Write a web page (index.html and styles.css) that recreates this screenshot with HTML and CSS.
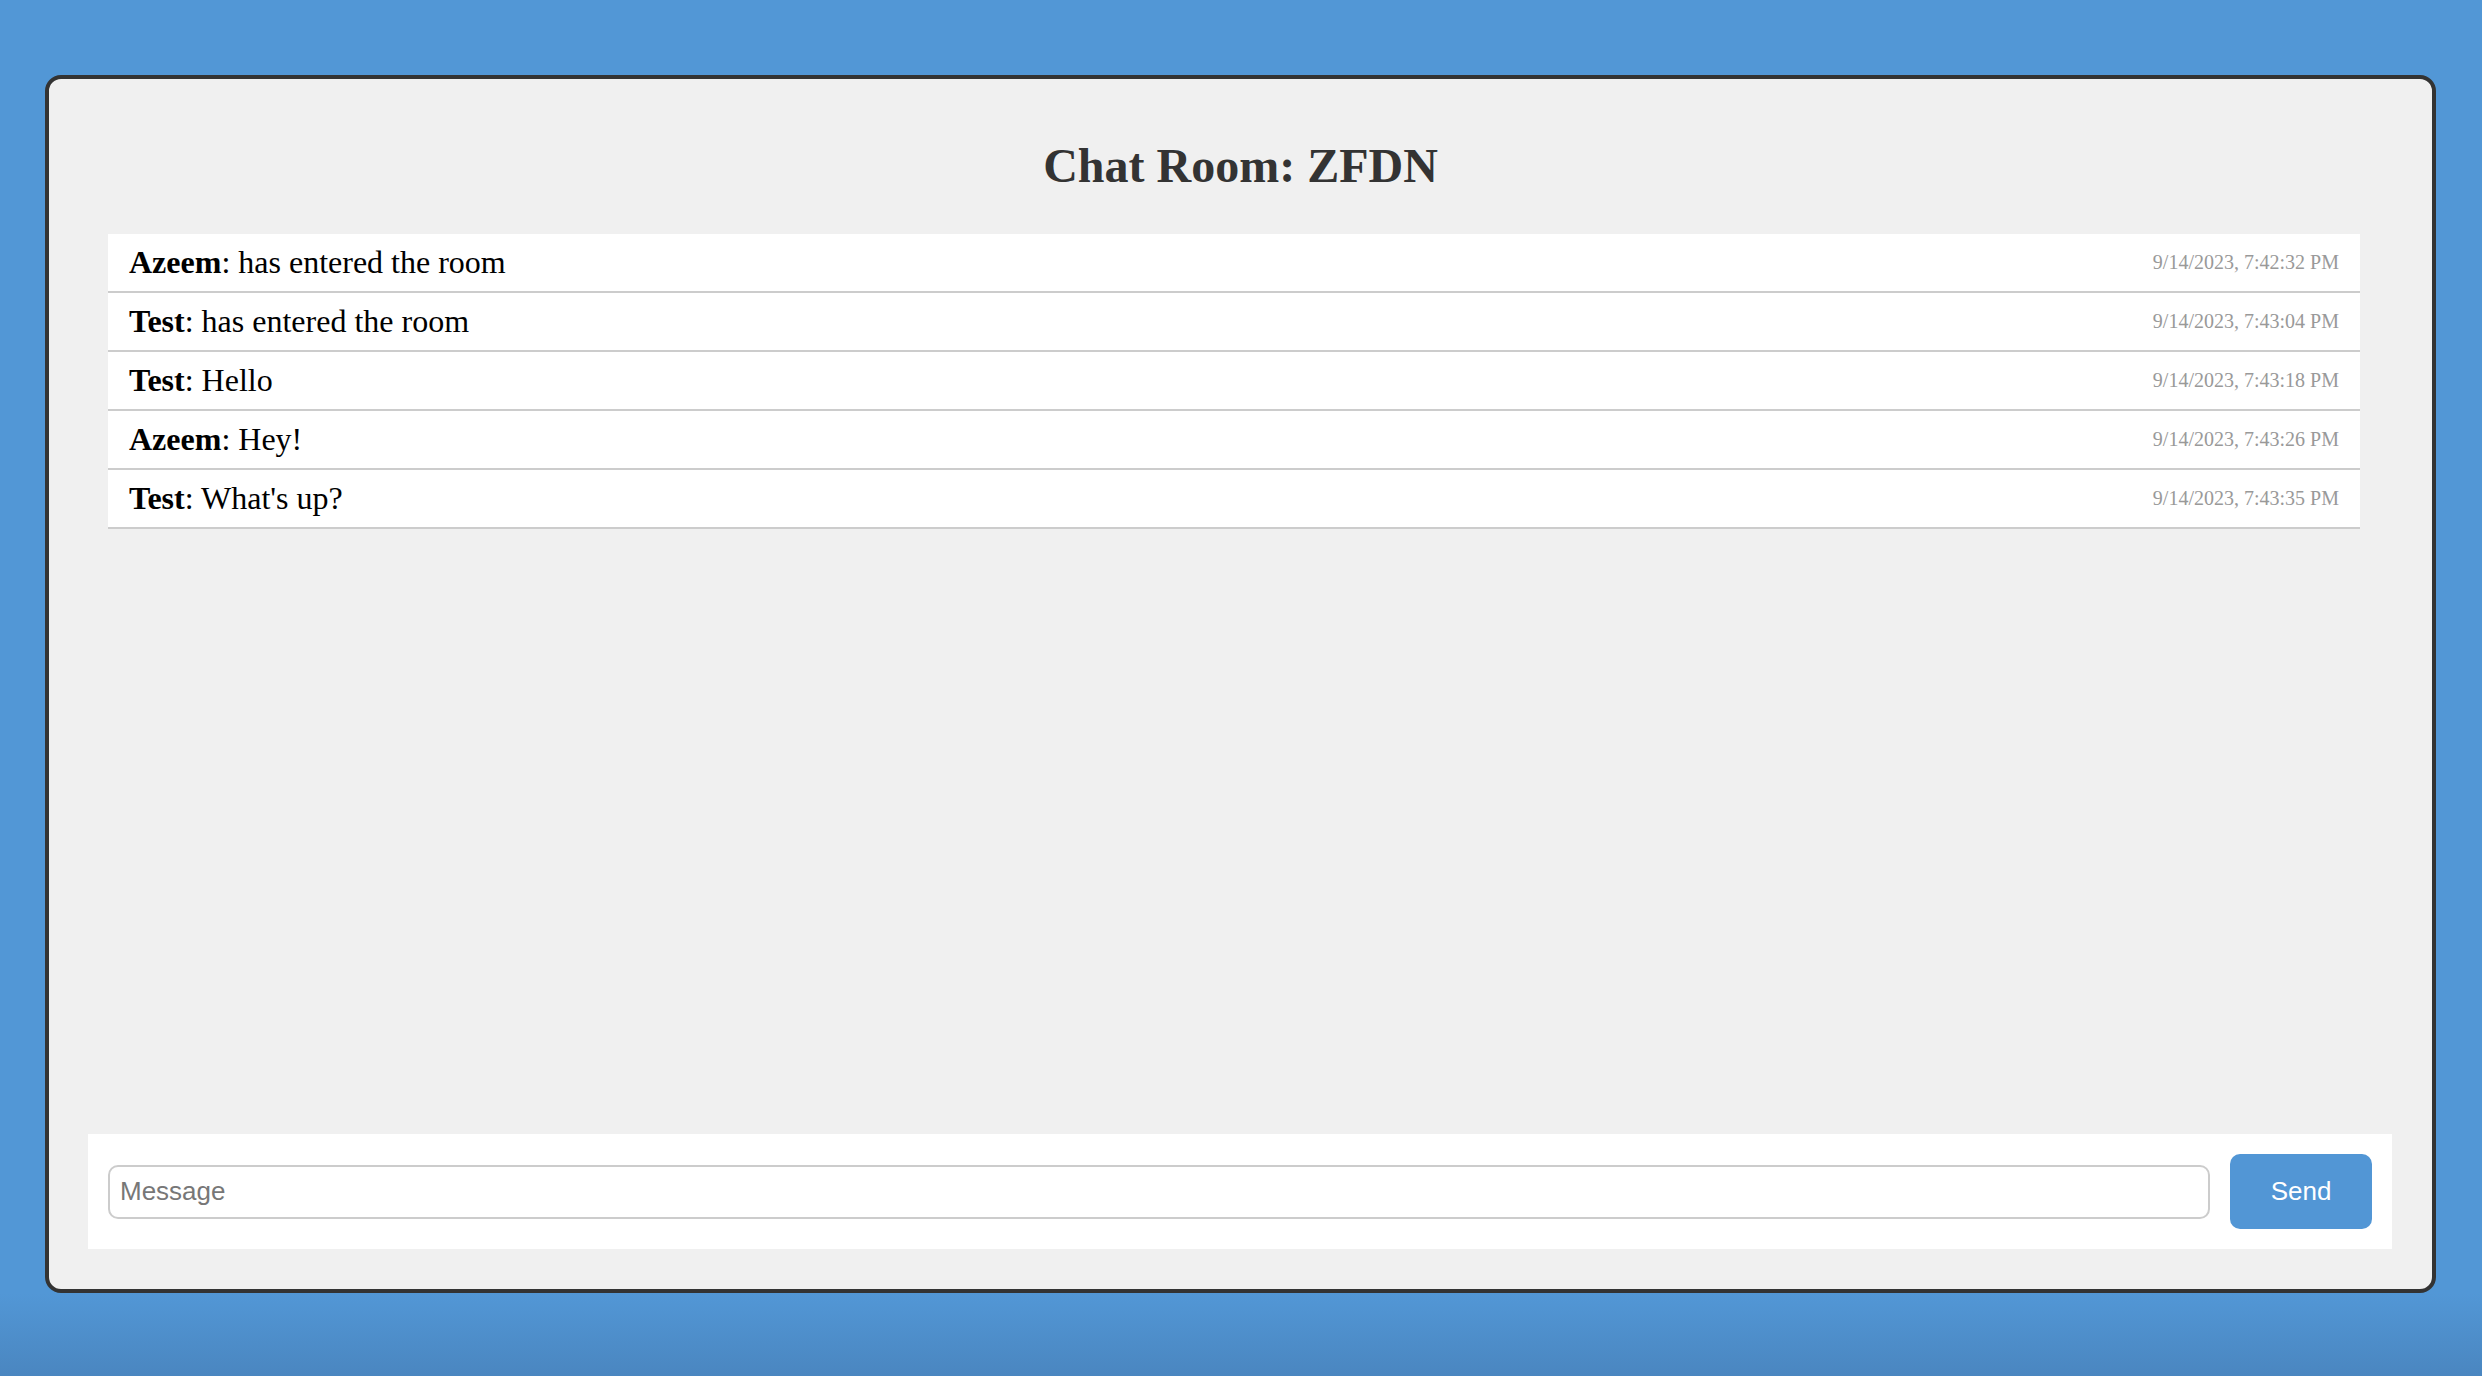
FILE: index.html
```html
<!DOCTYPE html>
<html lang="en">
<head>
<meta charset="utf-8">
<title>Chat Room: ZFDN</title>
<link rel="stylesheet" href="styles.css">
</head>
<body>
<div class="card">
  <h1 class="title">Chat Room: ZFDN</h1>
  <ul class="messages">
    <li class="msg"><span class="text"><strong>Azeem</strong>: has entered the room</span><span class="time">9/14/2023, 7:42:32 PM</span></li>
    <li class="msg"><span class="text"><strong>Test</strong>: has entered the room</span><span class="time">9/14/2023, 7:43:04 PM</span></li>
    <li class="msg"><span class="text"><strong>Test</strong>: Hello</span><span class="time">9/14/2023, 7:43:18 PM</span></li>
    <li class="msg"><span class="text"><strong>Azeem</strong>: Hey!</span><span class="time">9/14/2023, 7:43:26 PM</span></li>
    <li class="msg"><span class="text"><strong>Test</strong>: What's up?</span><span class="time">9/14/2023, 7:43:35 PM</span></li>
  </ul>
  <form class="composer">
    <input class="input" type="text" placeholder="Message">
    <button class="send" type="button">Send</button>
  </form>
</div>
</body>
</html>
```
FILE: styles.css
```css
* { box-sizing: border-box; }
html, body { height: 100%; }
body {
  margin: 0;
  padding: 75px 46px 83px 45px;
  display: flex;
  background: linear-gradient(to bottom, #5297d6 0%, #5297d6 94%, #4a86c0 100%);
  font-family: "Liberation Serif", "Times New Roman", serif;
}
.card {
  flex: 1;
  display: flex;
  flex-direction: column;
  background: #f0f0f0;
  border: 4px solid #333;
  border-radius: 16px;
}
.title {
  margin: 60px 0 42px;
  font-size: 48px;
  line-height: 53px;
  font-weight: bold;
  color: #333;
  text-align: center;
}
.messages {
  flex: 1;
  list-style: none;
  margin: 0 72px 0 59px;
  padding: 0;
}
.msg {
  display: flex;
  align-items: center;
  justify-content: space-between;
  height: 59px;
  padding: 0 21px 0 21px;
  background: #fff;
  border-bottom: 2px solid #ccc;
}
.text {
  font-size: 32px;
  color: #000;
}
.time {
  font-size: 20px;
  color: #999;
}
.composer {
  display: flex;
  align-items: center;
  gap: 20px;
  margin: 0 40px 40px 39px;
  padding: 20px;
  background: #fff;
}
.input {
  flex: 1;
  height: 54px;
  padding: 0 10px;
  border: 2px solid #ccc;
  border-radius: 10px;
  font-family: "Liberation Sans", Arial, sans-serif;
  font-size: 26px;
  color: #000;
  background: #fff;
  outline: none;
}
.input::placeholder { color: #777; }
.send {
  width: 142px;
  height: 75px;
  border: none;
  border-radius: 10px;
  background: #5296d5;
  color: #fff;
  font-family: "Liberation Sans", Arial, sans-serif;
  font-size: 26px;
  cursor: pointer;
}
```
